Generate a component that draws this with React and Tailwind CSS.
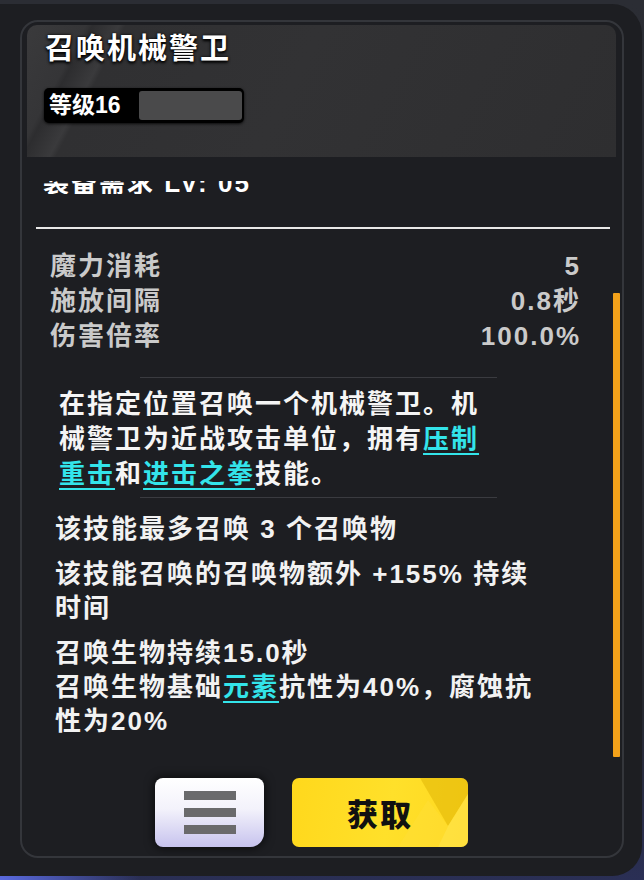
import React from 'react';

const stats = [
    { label: '魔力消耗', value: '5' },
    { label: '施放间隔', value: '0.8秒' },
    { label: '伤害倍率', value: '100.0%' },
];

const Link = ({ children }) => (
    <span className="text-[#33e4ea] underline decoration-2 underline-offset-[5px]">{children}</span>
);

const SkillPanel = () => {
    return (
        <div className="w-[644px] h-[880px] overflow-hidden bg-[radial-gradient(ellipse_140px_70px_at_0%_100%,#5a6ae0,transparent),linear-gradient(to_bottom,#2b2d34_0%,#25272e_80%,#2a2f55_100%)] font-['Liberation_Sans','Noto_Sans_CJK_SC',sans-serif]">
            {/* outer card */}
            <div className="ml-[-30px] mt-[4px] w-[672px] h-[872px] rounded-[30px] bg-[#1d1e22] pl-[50px] pt-[16px] pr-[18px] pb-[18px]">
                {/* inner panel */}
                <div className="relative h-full rounded-[18px] border-2 border-[#34363b] pl-[5px] pr-[6px] pt-[3px] flex flex-col">
                    {/* header */}
                    <div className="h-[132px] shrink-0 rounded-t-[10px] px-[17px] pt-[6px] bg-[linear-gradient(118deg,#3a3a3c_0%,#353537_9%,#2d2d2f_10%,#3a3a3c_14%,#303032_15%,#323234_45%,#2e2e30_100%)]">
                        <div className="ml-[1px] text-[29px] leading-[36px] tracking-[2px] font-bold text-white [text-shadow:0_0_3px_#000,0_2px_3px_#000]">
                            召唤机械警卫
                        </div>
                        <div className="mt-[21px] flex w-[200px] h-[35px] rounded-[5px] bg-black shadow-[0_1px_3px_rgba(0,0,0,0.8)]">
                            <span className="w-[95px] pl-[5px] text-[23px] leading-[35px] font-bold text-white">等级16</span>
                            <span className="flex-1 my-[3px] mr-[2px] rounded-[3px] bg-[#4a4a4b]" />
                        </div>
                    </div>

                    {/* scroll content */}
                    <div className="flex-1 pl-[9px] pr-[6px] overflow-hidden">
                        <div className="mt-[24px] h-[13px] overflow-hidden">
                            <div className="ml-[7px] -mt-[11px] text-[26px] leading-[26px] tracking-[2px] font-bold text-white">
                                装备需求 LV: 05
                            </div>
                        </div>
                        <div className="mt-[33px] h-[2px] bg-[#e8e8e8]" />

                        <div className="mt-[20px] pl-[14px] pr-[29px] text-[#cacaca] text-[26px] leading-[35px] tracking-[2px] font-semibold">
                            {stats.map((s) => (
                                <div key={s.label} className="flex justify-between">
                                    <span>{s.label}</span>
                                    <span>{s.value}</span>
                                </div>
                            ))}
                        </div>

                        <div className="mt-[23px] ml-[104px] w-[357px] h-px bg-[#3a3b40]" />

                        <div className="mt-[9px] pl-[23px] text-[#f5f5f5] text-[26px] leading-[35px] tracking-[2px] font-semibold">
                            <div>在指定位置召唤一个机械警卫。机</div>
                            <div>械警卫为近战攻击单位，拥有<Link>压制</Link></div>
                            <div><Link>重击</Link>和<Link>进击之拳</Link>技能。</div>
                        </div>

                        <div className="mt-[5px] ml-[104px] w-[357px] h-px bg-[#3a3b40]" />

                        <div className="pl-[19px] text-[#f2f2f2] text-[26px] leading-[34px] tracking-[2px] font-semibold">
                            <div className="mt-[14px]">该技能最多召唤 3 个召唤物</div>
                            <div className="mt-[11px]">
                                <div>该技能召唤的召唤物额外 +155% 持续</div>
                                <div>时间</div>
                            </div>
                            <div className="mt-[11px]">
                                <div>召唤生物持续15.0秒</div>
                                <div>召唤生物基础<Link>元素</Link>抗性为40%，腐蚀抗</div>
                                <div>性为20%</div>
                            </div>
                        </div>
                    </div>

                    {/* scrollbar */}
                    <div className="absolute left-[591px] top-[271px] w-[7px] h-[464px] rounded-[1px] bg-[#f2a11a]" />

                    {/* buttons */}
                    <div className="shrink-0 flex gap-[28px] pl-[128px] pb-[9px] pt-[10px]">
                        <button className="w-[109px] h-[69px] rounded-[8px] rounded-br-[14px] bg-[linear-gradient(to_bottom,#ffffff_0%,#f3f2fb_45%,#c7c3ee_100%)] shadow-[0_0_8px_2px_rgba(0,0,0,0.55)] flex flex-col items-center justify-center gap-[8px]">
                            <span className="w-[52px] h-[9px] bg-[#6a6a6c]" />
                            <span className="w-[52px] h-[9px] bg-[#6a6a6c]" />
                            <span className="w-[52px] h-[9px] bg-[#6a6a6c]" />
                        </button>
                        <button className="relative w-[176px] h-[69px] rounded-[7px] overflow-hidden bg-[linear-gradient(100deg,#ffd81c_0%,#ffe02a_55%,#ffd820_100%)] flex items-center justify-center">
                            <svg className="absolute right-0 top-0" width="70" height="69" viewBox="0 0 70 69">
                                <polygon points="22,0 70,0 70,16 50,48" fill="#d9ad00" opacity="0.45" />
                                <polygon points="50,48 70,16 70,69 40,69" fill="#ffe85a" opacity="0.5" />
                                <polygon points="0,69 30,22 50,48 40,69" fill="#ffe040" opacity="0.35" />
                            </svg>
                            <span className="relative text-[31px] leading-none tracking-[2px] font-black text-[#111] font-['Noto_Sans_CJK_SC',sans-serif]">获取</span>
                        </button>
                    </div>
                </div>
            </div>
        </div>
    );
};

export default function App() {
    return <SkillPanel />;
}
